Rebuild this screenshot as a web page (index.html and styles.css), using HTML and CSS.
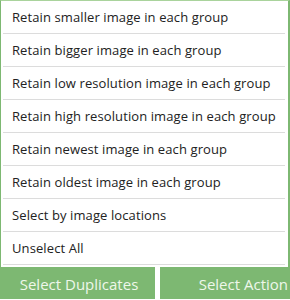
FILE: index.html
```html
<!DOCTYPE html>
<html>
<head>
<meta charset="utf-8">
<link rel="stylesheet" href="styles.css">
</head>
<body>
<div class="page">
  <ul class="menu">
    <li class="item">Retain smaller image in each group</li>
    <li class="item">Retain bigger image in each group</li>
    <li class="item">Retain low resolution image in each group</li>
    <li class="item">Retain high resolution image in each group</li>
    <li class="item">Retain newest image in each group</li>
    <li class="item">Retain oldest image in each group</li>
    <li class="item">Select by image locations</li>
    <li class="item">Unselect All</li>
  </ul>
  <div class="buttons">
    <div class="btn btn-dup">Select Duplicates</div>
    <div class="btn btn-act">Select Action</div>
  </div>
</div>
</body>
</html>
```

FILE: styles.css
```css
html, body {
  margin: 0;
  padding: 0;
  background: #ffffff;
  overflow: hidden;
}
.page {
  width: 290px;
  height: 300px;
  font-family: "Open Sans", "Noto Sans", sans-serif;
}
.menu {
  list-style: none;
  margin: 0;
  padding: 0 3px 2px 2px;
  width: 290px;
  box-sizing: border-box;
  border-top: 1px solid #a9d39c;
  border-left: 1px solid #7db872;
  border-right: 2px solid #7db872;
  background: #fff;
}
.item {
  height: 32px;
  line-height: 33px;
  padding-left: 9px;
  font-size: 13px;
  letter-spacing: 0.1px;
  color: #222;
  border-bottom: 1px solid #dcdcdc;
  white-space: nowrap;
}
.buttons {
  display: flex;
  gap: 5px;
  height: 32px;
  width: 290px;
}
.btn {
  background: #7db872;
  color: #eef7ea;
  font-size: 15px;
  line-height: 34px;
  white-space: nowrap;
  overflow: hidden;
}
.btn-dup {
  flex: none;
  width: 155px;
  text-align: center;
  padding-left: 3px;
  box-sizing: border-box;
}
.btn-act {
  flex: 1;
  text-align: right;
  padding-right: 2px;
}
```
